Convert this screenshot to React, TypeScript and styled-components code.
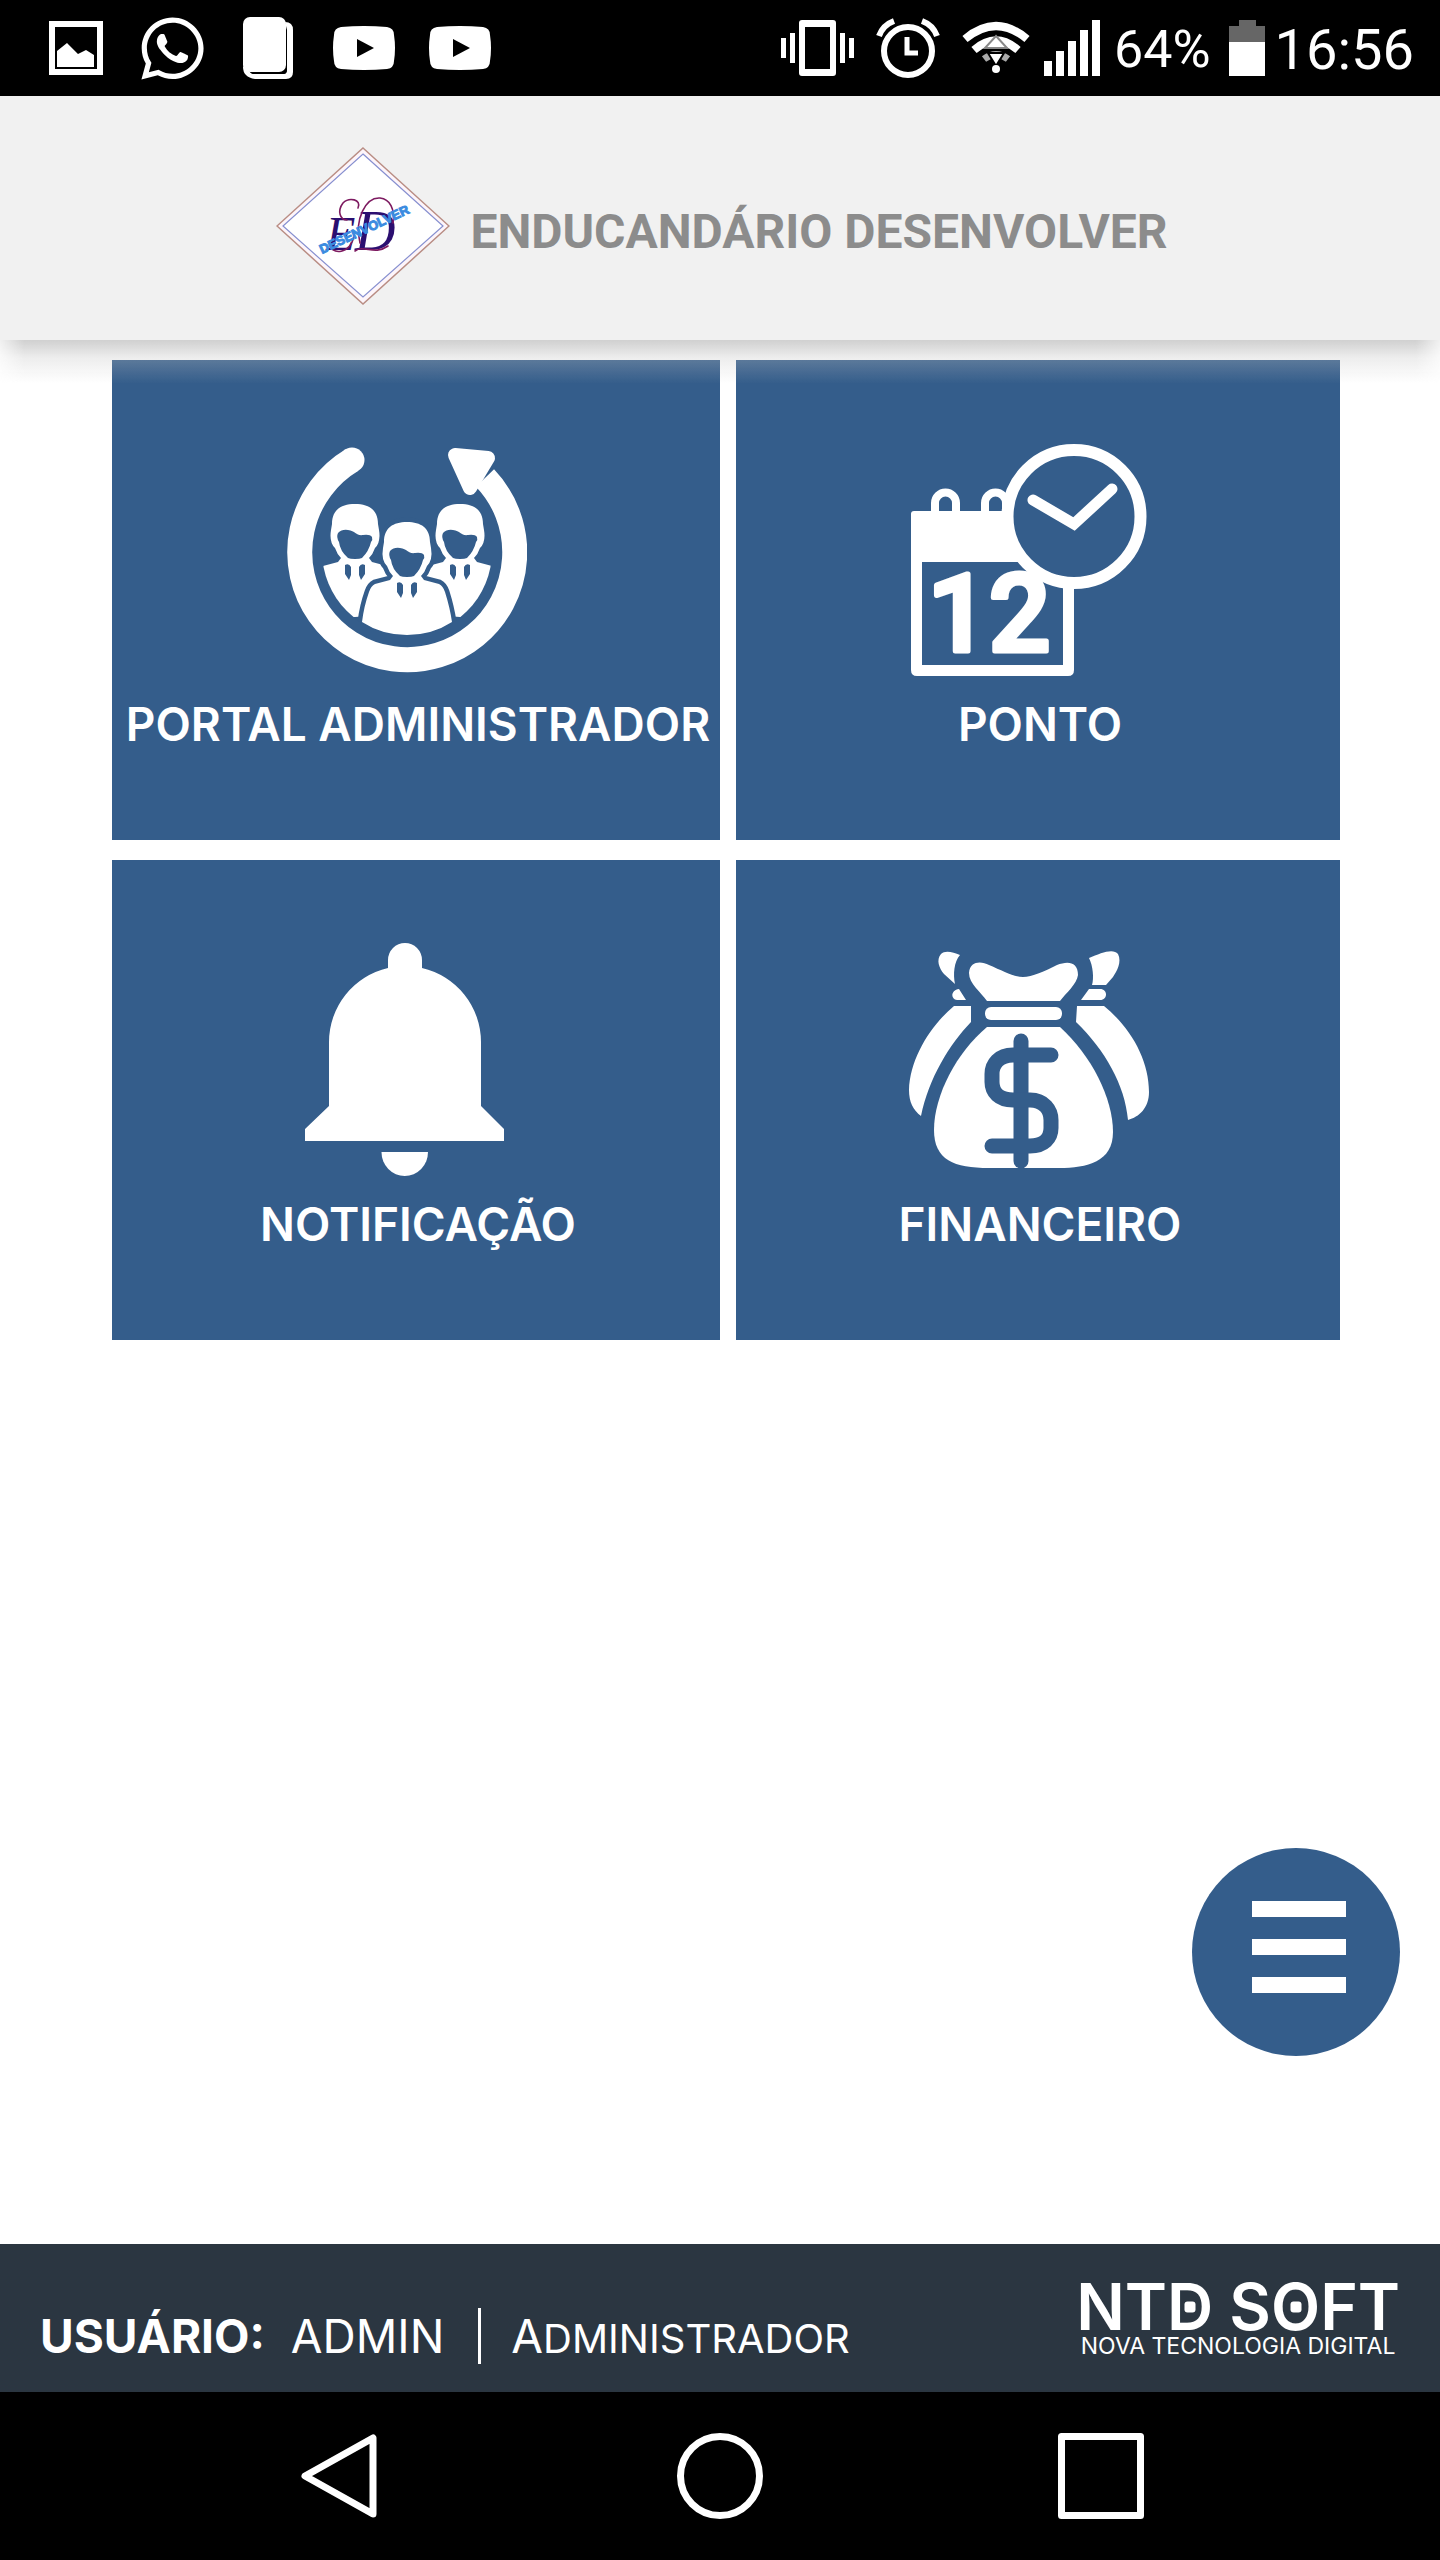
import React from "react";
import styled, { createGlobalStyle } from "styled-components";
import { FaWhatsapp } from "react-icons/fa";

const BLUE = "#345d8b";
const WHITE = "#ffffff";

const GlobalStyle = createGlobalStyle`
  *, *::before, *::after { box-sizing: border-box; }
  body { margin: 0; background: ${WHITE}; font-family: Inter, "Liberation Sans", sans-serif; }
  svg { display: block; flex: none; }
`;

const Screen = styled.div`
  display: flex;
  flex-direction: column;
  min-height: 100vh;
`;

const StatusBar = styled.div`
  display: flex;
  justify-content: space-between;
  align-items: center;
  height: 96px;
  padding: 0 26px 0 28px;
  background: #000;
  color: ${WHITE};
  font-family: Roboto, "Liberation Sans", sans-serif;
`;

const Notifications = styled.div`
  display: grid;
  grid-auto-flow: column;
  grid-auto-columns: 96px;
  place-items: center;
`;

const StatusGroup = styled.div<{ $gap: number }>`
  display: flex;
  align-items: center;
  gap: ${(p) => p.$gap}px;
`;

const StatusText = styled.span<{ $size: number }>`
  padding-top: 4px;
  font-size: ${(p) => p.$size}px;
  line-height: 64px;
`;

const Header = styled.header`
  position: relative;
  z-index: 1;
  display: flex;
  justify-content: center;
  align-items: center;
  gap: 20px;
  height: 244px;
  padding: 16px 0 0 4px;
  background: #f1f1f1;

  &::after {
    content: "";
    position: absolute;
    top: 100%;
    left: 0;
    right: 0;
    height: 44px;
    background: linear-gradient(
      rgba(196, 196, 196, 0.8),
      rgba(196, 196, 196, 0.3) 40%,
      rgba(196, 196, 196, 0)
    );
    mask-image: linear-gradient(
      to right,
      rgba(0, 0, 0, 0.3),
      #000 24px,
      #000 calc(100% - 24px),
      rgba(0, 0, 0, 0.3)
    );
    pointer-events: none;
  }
`;

const Title = styled.h1`
  margin: 0;
  padding-top: 12px;
  color: #8c8c8c;
  font-family: Roboto, "Liberation Sans", sans-serif;
  font-size: 48px;
  font-weight: 700;
  line-height: 56px;
`;

const Main = styled.main`
  position: relative;
  flex: 1;
  padding: 20px 100px 20px 112px;
`;

const TileGrid = styled.nav`
  display: grid;
  grid-template-columns: 608fr 604fr;
  gap: 20px 16px;
`;

const Tile = styled.button`
  display: flex;
  flex-direction: column;
  align-items: center;
  gap: 16px;
  height: 480px;
  padding: 80px 0 0;
  border: 0;
  background: ${BLUE};
  color: ${WHITE};
  font: inherit;
  cursor: pointer;

  svg { margin-right: 18px; }
`;

const TileLabel = styled.span`
  padding-left: 4px;
  font-size: 46px;
  font-weight: 600;
  line-height: 56px;
  white-space: nowrap;
`;

const MenuButton = styled.button`
  position: absolute;
  right: 40px;
  bottom: 188px;
  display: flex;
  flex-direction: column;
  align-items: center;
  gap: 22px;
  width: 208px;
  height: 208px;
  padding: 53px 0 0 6px;
  border: 0;
  border-radius: 50%;
  background: ${BLUE};
  cursor: pointer;
`;

const MenuLine = styled.span`
  width: 94px;
  height: 16px;
  background: ${WHITE};
`;

const Footer = styled.footer`
  display: flex;
  justify-content: space-between;
  align-items: flex-start;
  height: 148px;
  padding: 40px 40px 0;
  background: #2b3641;
  color: ${WHITE};
`;

const UserInfo = styled.div`
  display: flex;
  align-items: baseline;
  padding-top: 24px;
  font-size: 46px;
  line-height: 56px;
`;

const UserLabel = styled.span`
  font-weight: 700;
`;

const UserName = styled.span`
  margin-left: 26px;
  padding-right: 34px;
  border-right: 3px solid ${WHITE};
`;

const UserRole = styled.span`
  display: block;
  margin-left: 30px;
  font-size: 40px;
  text-transform: uppercase;

  &::first-letter { font-size: 46px; }
`;

const Company = styled.div`
  display: flex;
  flex-direction: column;
  align-items: center;
  gap: 4px;
`;

const CompanyName = styled.strong`
  font-size: 64px;
  font-weight: 600;
  line-height: 46px;
  white-space: nowrap;
`;

const DottedLetter = styled.span`
  position: relative;
  display: inline-block;

  &::after {
    content: "";
    position: absolute;
    top: 50%;
    left: 50%;
    width: 11px;
    height: 11px;
    border-radius: 3px;
    background: ${WHITE};
    transform: translate(-50%, -50%);
  }
`;

const CompanyTagline = styled.span`
  font-size: 23px;
  line-height: 24px;
  white-space: nowrap;
`;

const NavBar = styled.div`
  display: grid;
  grid-template-columns: repeat(3, 1fr);
  place-items: center;
  height: 168px;
  padding: 0 148px;
  background: #000;
`;

const NavButton = styled.button`
  padding: 0;
  border: 0;
  background: none;
  cursor: pointer;
`;

const PictureIcon = () => (
  <svg width="54" height="54" viewBox="0 0 54 54" fill="none">
    <rect x="3" y="3" width="48" height="48" stroke="#fff" strokeWidth="6" />
    <path d="M8 46V30l10-8 11 11 8-4 8 5v12z" fill="#fff" />
  </svg>
);

const PagesIcon = () => (
  <svg width="50" height="62" viewBox="0 0 50 62">
    <path d="M42 5q8 0 8 8v42q0 7-7 7H12Q0 60 0 50l5-4v6q2 5 6 5h30q3 0 3-4V13z" fill="#fff" />
    <path d="M44 12v40q0 4-4 5H10q-2 0-3-3h32q5 0 5-6z" fill="#000" />
    <rect width="43" height="55" rx="7" fill="#fff" />
  </svg>
);

const VideoIcon = () => (
  <svg width="62" height="44" viewBox="0 0 62 44">
    <path d="M8 1Q31-1 54 1q7 1 7 8 2 13 0 26 0 7-7 8-23 2-46 0-7-1-7-8-2-13 0-26 0-7 7-8z" fill="#fff" />
    <path d="M24 13l17 9-17 9z" fill="#000" />
  </svg>
);

const VibrateIcon = () => (
  <svg width="73" height="56" viewBox="0 0 73 56" fill="#fff">
    <path fillRule="evenodd" d="M21 0h31q3 0 3 3v50q0 3-3 3H21q-3 0-3-3V3q0-3 3-3zm3 7v42h25V7z" />
    <path d="M0 18h5v20H0zM9 13h5v30H9zM59 13h5v30h-5zM68 18h5v20h-5z" />
  </svg>
);

const AlarmIcon = () => (
  <svg width="64" height="60" viewBox="0 0 64 60" fill="none" stroke="#fff">
    <circle cx="32" cy="33" r="24" strokeWidth="6" />
    <path d="M31 19v16h11" strokeWidth="5" />
    <path d="M3 18Q7 7 18 3M61 18Q57 7 46 3" strokeWidth="6" />
  </svg>
);

const WifiIcon = () => (
  <svg width="68" height="54" viewBox="0 0 68 54" fill="none" stroke="#fff">
    <path d="M3 18Q34-8 65 18" strokeWidth="8" />
    <path d="M12 29Q34 10 56 29" strokeWidth="8" />
    <path d="M22 38Q34 29 46 38" strokeWidth="7" stroke="#aaa" />
    <path d="M34 15l11 12H23z" fill="#fff" stroke="#888" strokeWidth="2" />
    <path d="M26 32h16L34 45z" fill="#fff" stroke="#000" strokeWidth="2" />
    <circle cx="34" cy="48" r="4" fill="#fff" stroke="none" />
  </svg>
);

const SignalIcon = () => (
  <svg width="56" height="56" viewBox="0 0 56 56" fill="#fff">
    <path d="M0 41h8v15H0zM12 31h8v25h-8zM24 21h8v35h-8zM36 10h8v46h-8zM48 0h8v56h-8z" />
  </svg>
);

const BatteryIcon = () => (
  <svg width="36" height="56" viewBox="0 0 36 56">
    <path d="M10 0h17v6h9v16H0V6h10z" fill="#666" />
    <path d="M0 22h36v34H0z" fill="#fff" />
  </svg>
);

const SchoolLogo = () => (
  <svg width="174" height="158" viewBox="0 0 174 158" role="img" aria-label="Desenvolver">
    <path d="M87 1l86 78-86 78L1 79z" fill="#fdf5fa" stroke="#b98d84" strokeWidth="1.5" />
    <path d="M87 7l80 72-80 71L7 79z" fill="#fff" stroke="#8790d0" strokeWidth="1.2" />
    <g fontFamily="Liberation Serif, serif" fontStyle="italic" fill="#2b0f70">
      <text x="50" y="103" fontSize="48">E</text>
      <text x="79" y="103" fontSize="56">D</text>
    </g>
    <g fill="none" stroke="#7d1a60" strokeWidth="1.6" strokeLinecap="round">
      <path d="M82 61C86 52 73 50 67 56C61 64 64 73 71 73M53 95C54 110 76 107 78 88" />
      <path d="M79 104C88 97 98 109 112 99M84 96C78 72 90 50 104 51C114 52 119 62 117 76" />
    </g>
    <text x="46" y="107" transform="rotate(-25 46 107)" fontFamily="Liberation Sans, sans-serif" fontWeight="700" fontSize="13" fill="#3b8be0" stroke="#3b8be0" strokeWidth="1">
      DESENVOLVER
    </text>
  </svg>
);

const HEAD =
  "M96 108L97 102C97 88 106 82 120 82S143 88 143 102L144 108Q146 120 140 126Q138 132 134 136L137 140L152 144Q156 146 158 152Q163 168 165 182Q145 195 120 195T75 182Q77 166 82 152Q84 146 88 144L103 140L106 136Q102 132 100 126Q94 120 96 108Z";

const Person = ({ outlined }: { outlined?: boolean }) => (
  <g>
    {outlined && <path d={HEAD} fill={BLUE} stroke={BLUE} strokeWidth="9" />}
    <path d={HEAD} fill="#fff" />
    <path
      d="M103 111Q107 107 113 108C121 109 121 114 128 113Q135 112 137 115Q138 118 136 120Q134 129 127 136Q125 137 120 137T113 136Q105 129 104 120Q101 115 103 111zM110 143Q114 141 116 145V153L114 158L110 152zM130 143Q126 141 124 145V153L126 158L130 152z"
      fill={BLUE}
    />
  </g>
);

const AdminIcon = () => (
  <svg width="240" height="240" viewBox="0 0 240 240" aria-hidden="true">
    <defs>
      <clipPath id="ring-inside">
        <circle cx="120" cy="111" r="85" />
      </clipPath>
    </defs>
    <path d="M65 20A107.5 107.5 0 1 0 198 38" fill="none" stroke="#fff" strokeWidth="25" />
    <circle cx="65" cy="20" r="12.5" fill="#fff" />
    <path d="M168 15L201 18L183 48z" fill="#fff" stroke="#fff" strokeWidth="14" strokeLinejoin="round" />
    <g clipPath="url(#ring-inside)">
      <g transform="translate(-52 -18)"><Person /></g>
      <g transform="translate(53 -18)"><Person /></g>
      <Person outlined />
    </g>
  </svg>
);

const ClockIcon = () => (
  <svg width="240" height="240" viewBox="0 0 240 240" aria-hidden="true">
    <path fillRule="evenodd" fill="#fff" d="M5 71H165V230Q165 236 159 236H8Q2 236 2 230V74Q2 71 5 71zM13 122V225H154V122z" />
    <path d="M26 74V63a10 10 0 0 1 21 0V74M76 74V63a10 10 0 0 1 21 0V74" fill="none" stroke="#fff" strokeWidth="8" />
    <path d="M31 71V64a5 5 0 0 1 11 0V71zM81 71V64a5 5 0 0 1 11 0V71z" fill={BLUE} />
    <text x="80" y="211" textAnchor="middle" fontFamily="Roboto, Liberation Sans, sans-serif" fontWeight="500" fontSize="108" fill="#fff" stroke="#fff" strokeWidth="5" strokeLinejoin="round">
      12
    </text>
    <circle cx="165" cy="76.5" r="66.5" fill={BLUE} stroke="#fff" strokeWidth="12" />
    <path d="M124 60L165 84L203 49" fill="none" stroke="#fff" strokeWidth="11" strokeLinecap="round" />
  </svg>
);

const BellIcon = () => (
  <svg width="240" height="240" viewBox="0 0 240 240" fill="#fff" aria-hidden="true">
    <path d="M101 28V20a17 17 0 0 1 34 0V28A76 76 0 0 1 194 102V166L217 189V201H18V189L42 166V102A76 76 0 0 1 101 28z" />
    <path d="M94.500 212H141a23.200 24 0 0 1-46.500 0z" />
  </svg>
);

const MoneyIcon = () => (
  <svg width="240" height="240" viewBox="0 0 240 240" fill="#fff" aria-hidden="true">
    <path d="M51 15C44 12 36 10 32 14C27 20 30 28 35 34L46 44C44 34 45 22 51 15z" />
    <path d="M180 18C192 13 204 8 209 14C213 22 208 31 204 37L197 45H183C185 38 184 26 180 18z" />
    <path d="M50 49C42 50 41 59 48 60H57zM180 49H191C199 49 199 60 191 60H172z" />
    <path d="M45 66H62V82C40 105 20 138 12 176C4 170 0 162 0 150C1 118 22 85 45 66z" />
    <path d="M168 66H195C222 88 240 120 240 152C240 168 230 177 219 180C216 145 196 110 167 82z" />
    <path d="M78 61C72 52 60 44 60 33C61 21 72 21 80 25C94 31 105 37 114 37S136 31 148 25C158 21 169 21 169 35C168 44 157 53 151 61z" />
    <rect x="76" y="67" width="77" height="13" rx="6" />
    <path d="M78 87H151C182 115 204 158 204 192C204 222 178 228 150 228H80C45 228 25 220 25 190C25 155 48 112 78 87z" />
    <g fill="none" stroke={BLUE} strokeWidth="15" strokeLinecap="round">
      <path d="M112 101V221" />
      <path d="M142 115H104C90 115 83 124 83 134V142C83 152 90 160 104 160H121C135 160 142 170 142 180V188C142 198 135 206 121 206H83" />
    </g>
  </svg>
);

const tiles = [
  { label: "PORTAL ADMINISTRADOR", Icon: AdminIcon },
  { label: "PONTO", Icon: ClockIcon },
  { label: "NOTIFICAÇÃO", Icon: BellIcon },
  { label: "FINANCEIRO", Icon: MoneyIcon },
];

export default function App() {
  return (
    <Screen>
      <GlobalStyle />
      <StatusBar>
        <Notifications>
          <PictureIcon />
          <FaWhatsapp size={71} />
          <PagesIcon />
          <VideoIcon />
          <VideoIcon />
        </Notifications>
        <StatusGroup $gap={18}>
          <StatusGroup $gap={14}>
            <StatusGroup $gap={22}>
              <VibrateIcon />
              <AlarmIcon />
              <WifiIcon />
            </StatusGroup>
            <SignalIcon />
            <StatusText $size={52}>64%</StatusText>
          </StatusGroup>
          <StatusGroup $gap={10}>
            <BatteryIcon />
            <StatusText $size={56}>16:56</StatusText>
          </StatusGroup>
        </StatusGroup>
      </StatusBar>
      <Header>
        <SchoolLogo />
        <Title>ENDUCANDÁRIO DESENVOLVER</Title>
      </Header>
      <Main>
        <TileGrid>
          {tiles.map(({ label, Icon }) => (
            <Tile key={label} type="button">
              <Icon />
              <TileLabel>{label}</TileLabel>
            </Tile>
          ))}
        </TileGrid>
        <MenuButton type="button" aria-label="Menu">
          <MenuLine />
          <MenuLine />
          <MenuLine />
        </MenuButton>
      </Main>
      <Footer>
        <UserInfo>
          <UserLabel>USUÁRIO:</UserLabel>
          <UserName>ADMIN</UserName>
          <UserRole>Administrador</UserRole>
        </UserInfo>
        <Company>
          <CompanyName>
            NT<DottedLetter>D</DottedLetter> S<DottedLetter>O</DottedLetter>FT
          </CompanyName>
          <CompanyTagline>NOVA TECNOLOGIA DIGITAL</CompanyTagline>
        </Company>
      </Footer>
      <NavBar>
        <NavButton type="button" aria-label="Voltar">
          <svg width="78" height="88" viewBox="0 0 78 88" fill="none" stroke="#fff" strokeWidth="7" strokeLinejoin="round">
            <path d="M73 6v76L5 44z" />
          </svg>
        </NavButton>
        <NavButton type="button" aria-label="Início">
          <svg width="88" height="88" viewBox="0 0 88 88" fill="none" stroke="#fff" strokeWidth="7">
            <circle cx="44" cy="44" r="39.500" />
          </svg>
        </NavButton>
        <NavButton type="button" aria-label="Recentes">
          <svg width="88" height="88" viewBox="0 0 88 88" fill="none" stroke="#fff" strokeWidth="7" strokeLinejoin="round">
            <path d="M4.500 4.500h79v79h-79z" />
          </svg>
        </NavButton>
      </NavBar>
    </Screen>
  );
}
